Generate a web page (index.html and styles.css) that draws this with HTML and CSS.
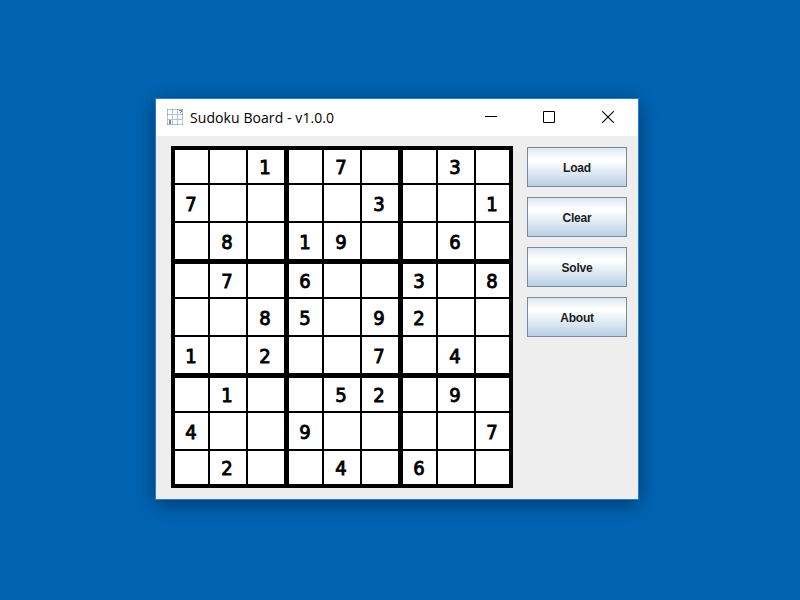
FILE: index.html
```html
<!DOCTYPE html>
<html lang="en">
<head>
<meta charset="utf-8">
<title>Sudoku Board</title>
<link rel="stylesheet" href="styles.css">
</head>
<body>
<main class="window">
  <header class="titlebar">
    <svg class="app-icon" width="16" height="16" viewBox="0 0 16 16" shape-rendering="crispEdges">
      <path d="M0 0h16v16H0z" fill="#fdfeff"/>
      <path d="M0 .5h16M0 5.5h16M0 10.5h16M0 15.5h16M.5 0v16M5.5 0v16M10.5 0v16M15.5 0v16" stroke="#b4c3cf" fill="none"/>
      <path d="M0 0h1v1H0zM5 0h1v1H5zM10 0h1v1h-1zM15 0h1v1h-1zM0 5h1v1H0zM0 15h1v1H0zM5 15h1v1H5zM10 15h1v1h-1zM15 15h1v1h-1zM15 5h1v1h-1z" fill="#7d9ab2"/>
      <path d="M12 1h3v1h-3zM14 2h1v1h-1zM13 3h1v1h-1z" fill="#718394"/>
      <path d="M2 11h2v4H2z" fill="#788b9b"/>
    </svg>
    <h1 class="title">Sudoku Board - v1.0.0</h1>
    <div class="controls">
      <svg width="12" height="12" viewBox="0 0 12 12"><path d="M0 5.5h12" stroke="#000"/></svg>
      <svg width="12" height="12" viewBox="0 0 12 12"><path d="M.5 .5h11v11H.5z" stroke="#000" fill="none"/></svg>
      <svg width="12" height="12" viewBox="0 0 12 12"><path d="M.2 .2l11.6 11.6M11.8 .2L.2 11.8" stroke="#000" stroke-width="1.1"/></svg>
    </div>
  </header>
  <div class="content">
    <div class="board" id="board"></div>
    <nav class="actions">
      <button>Load</button>
      <button>Clear</button>
      <button>Solve</button>
      <button>About</button>
    </nav>
  </div>
</main>
<script src="board.js"></script>
</body>
</html>
```
FILE: styles.css
```css
* { box-sizing: border-box; }
body {
  margin: 0;
  height: 600px;
  padding: 98px 0 0 155px;
  background: #0063b1;
  font-family: "Liberation Sans", Arial, sans-serif;
  overflow: hidden;
}
.window {
  width: 484px;
  height: 402px;
  border: 1px solid #1a80d9;
  background: #eee;
  box-shadow: 0 4px 18px rgba(0, 0, 0, .42);
}
.titlebar {
  display: flex;
  align-items: flex-start;
  height: 37px;
  padding: 10px 24px 0 11px;
  background: #fff;
}
.title {
  margin: -1px 0 0 7px;
  font: 400 14px/20px "Open Sans", "Noto Sans", sans-serif;
  letter-spacing: .08px;
  white-space: nowrap;
  color: #000;
}
.controls {
  display: grid;
  grid-template-columns: 58px 59px 12px;
  margin: 2px 0 0 auto;
}
.controls svg { display: block; }
.content {
  display: flex;
  align-items: flex-start;
  gap: 14px;
  padding: 10px 0 0 15px;
}
.board {
  display: grid;
  grid-template: 109px 109px 106px / 109px 109px 106px;
  gap: 5px;
  padding: 4px;
  background: #000;
}
.box {
  display: grid;
  grid-template: 33px 36px 36px / 33px 36px 36px;
  gap: 2px;
}
.box:nth-child(3n) { grid-template-columns: 33px 36px 33px; }
.box:nth-child(n + 7) { grid-template-rows: 33px 36px 33px; }
.cell {
  display: flex;
  align-items: center;
  justify-content: center;
  padding-right: 1px;
  background: #fff;
  color: #000;
  font: 400 20px/24px "DejaVu Sans Condensed", "DejaVu Sans", sans-serif;
  font-stretch: condensed;
  -webkit-text-stroke: .9px #000;
}
.cell:nth-child(n + 4) { padding-top: 2px; }
.box:nth-child(n + 7) .cell:nth-child(n + 7) { padding-top: 0; }
.cell:not(:nth-child(3n + 1)) { padding-right: 2px; }
.box:nth-child(3n) .cell:nth-child(3n) { padding-right: 1px; }
.actions {
  display: grid;
  gap: 10px;
  padding-top: 1px;
}
.actions button {
  width: 100px;
  height: 40px;
  padding: 2px 0 0;
  border: 1px solid #7a8a99;
  background: linear-gradient(#dde8f3, #fff 30%, #fff 34%, #b8cfe5);
  color: #1c1c1c;
  font: bold 12px/14px "Liberation Sans", Arial, sans-serif;
  letter-spacing: -.2px;
}
```
FILE: board.js
```js
const rows = [
  "..1.7..3.",
  "7....3..1",
  ".8.19..6.",
  ".7.6..3.8",
  "..85.92..",
  "1.2..7.4.",
  ".1..52.9.",
  "4..9....7",
  ".2..4.6..",
];

const board = document.getElementById("board");
for (let b = 0; b < 9; b++) {
  const box = document.createElement("div");
  box.className = "box";
  for (let c = 0; c < 9; c++) {
    const row = Math.floor(b / 3) * 3 + Math.floor(c / 3);
    const col = (b % 3) * 3 + (c % 3);
    const cell = document.createElement("div");
    cell.className = "cell";
    cell.textContent = rows[row][col].replace(".", "");
    box.append(cell);
  }
  board.append(box);
}
```
